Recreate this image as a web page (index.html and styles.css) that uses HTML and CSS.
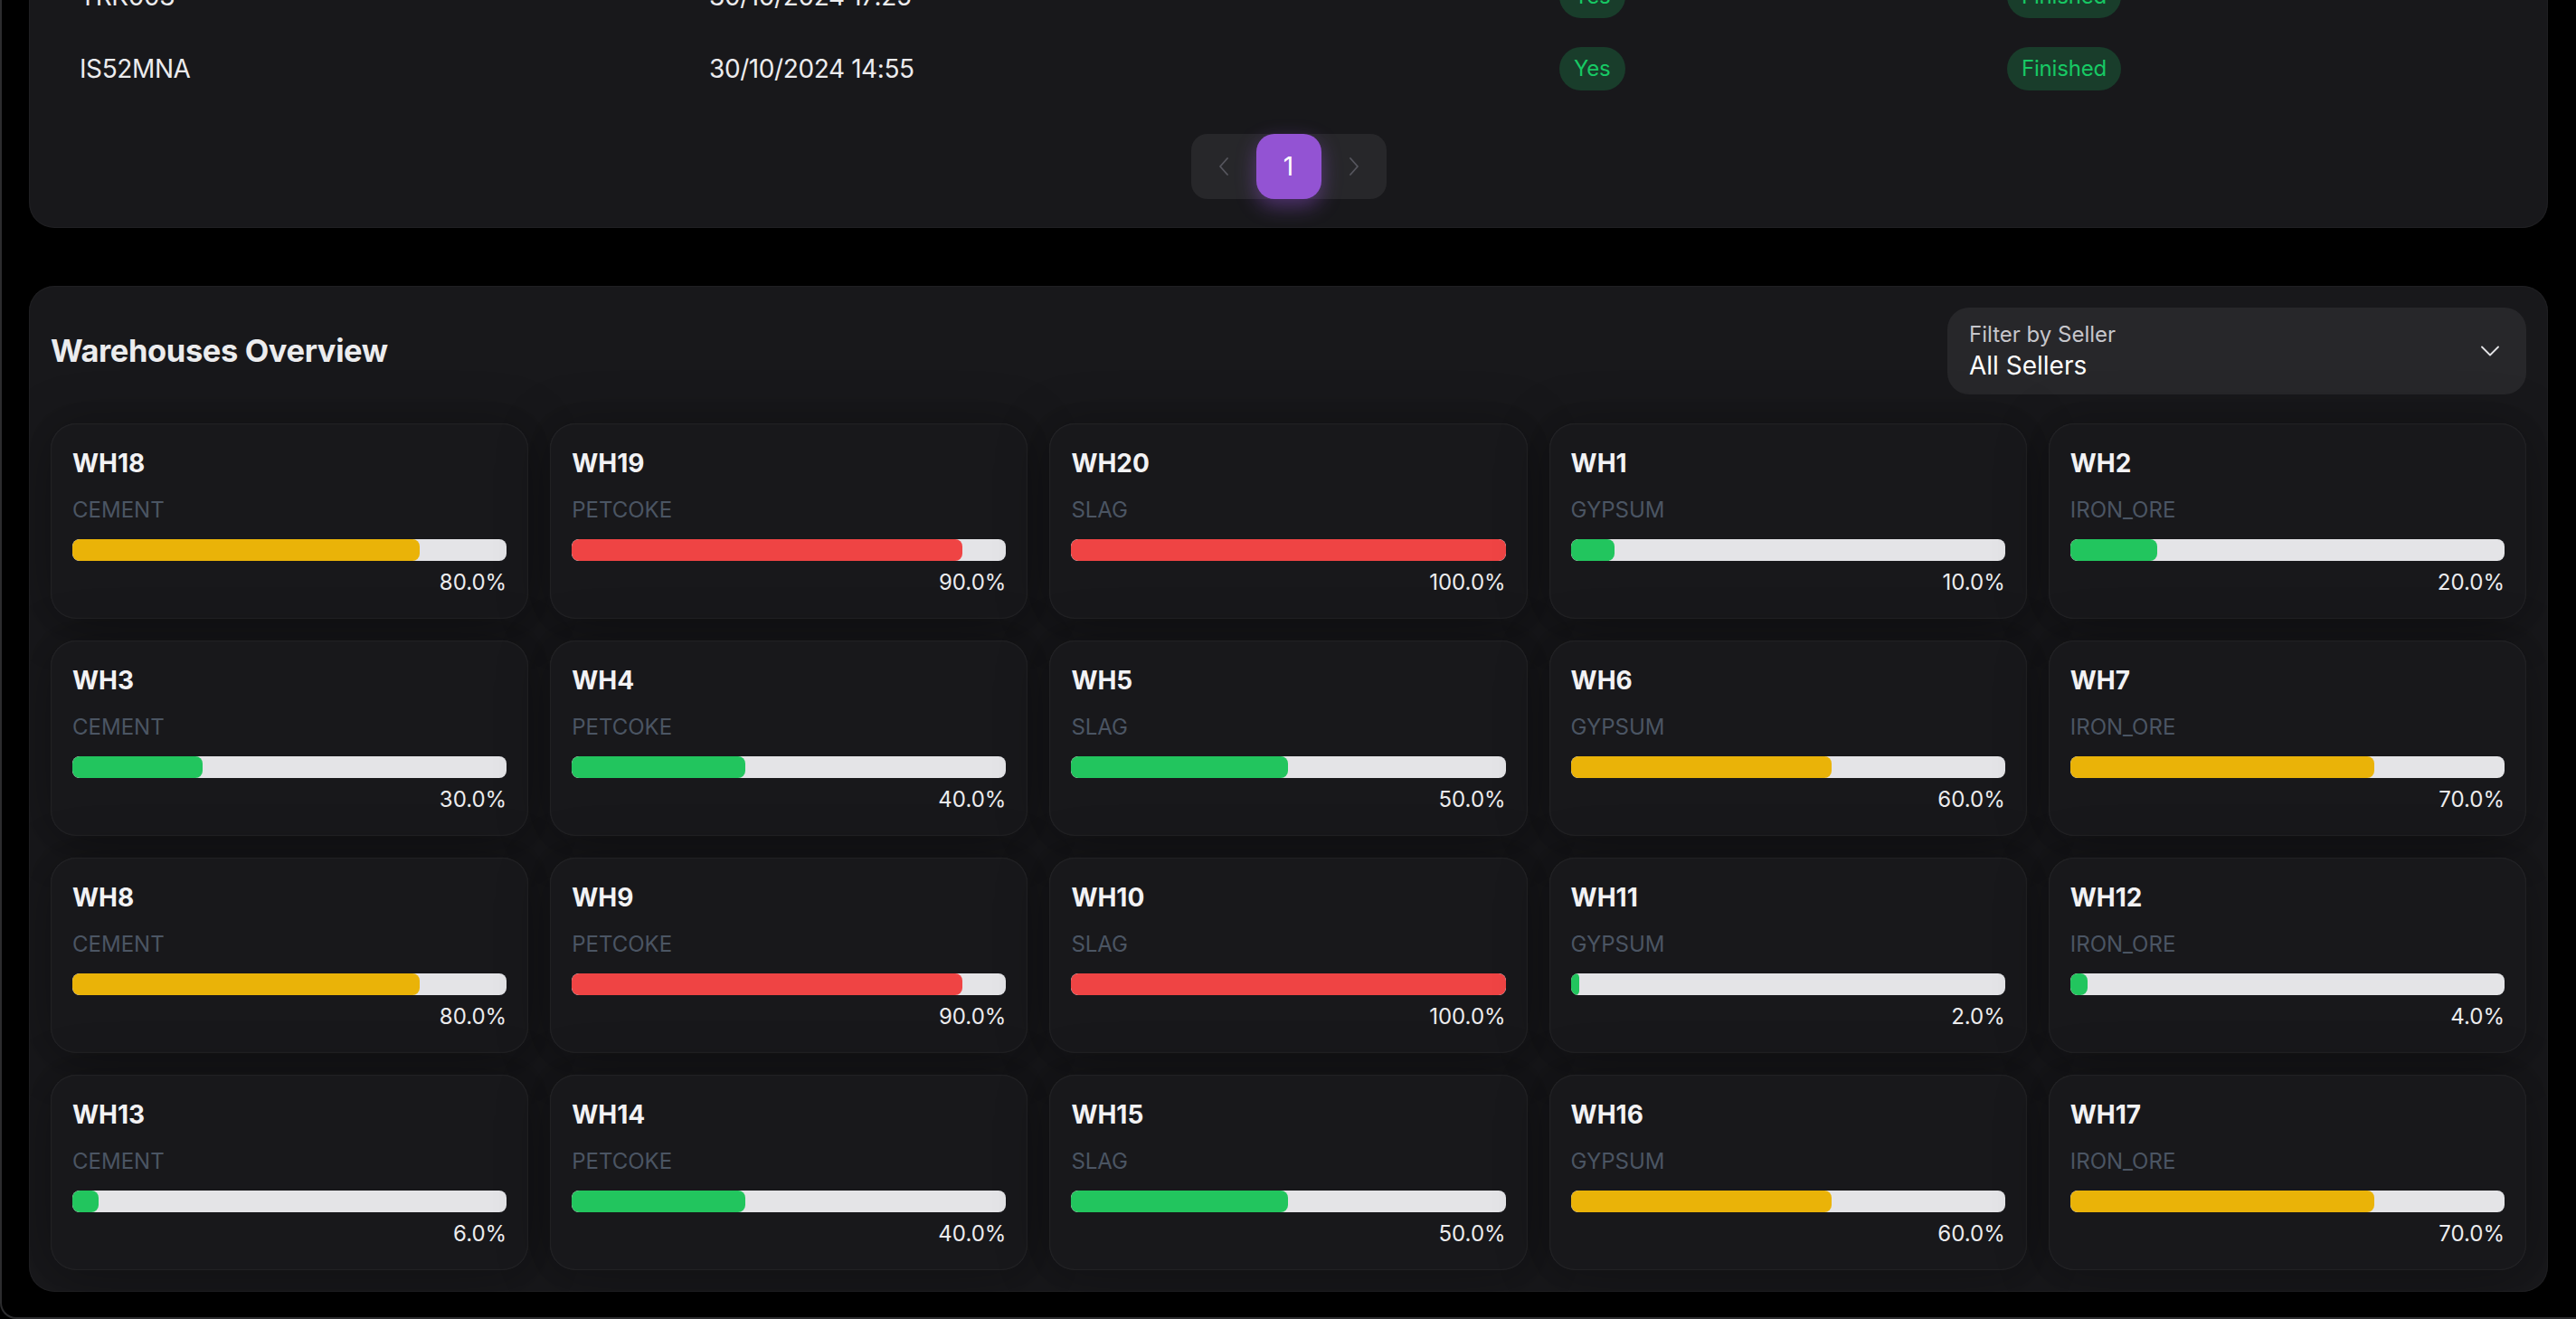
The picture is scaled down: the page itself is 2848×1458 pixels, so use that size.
FILE: index.html
```html
<!DOCTYPE html>
<html lang="en">
<head>
<meta charset="utf-8">
<title>Warehouses Overview</title>
<link rel="stylesheet" href="styles.css">
</head>
<body>
<div class="frame"></div>
<main class="page">
  <section class="card table-card">
    <div class="table">
      <div class="tr">
        <div class="td">TRK003</div>
        <div class="td">30/10/2024 17:25</div>
        <div class="td"><span class="chip">Yes</span></div>
        <div class="td"><span class="chip">Finished</span></div>
      </div>
      <div class="tr">
        <div class="td">IS52MNA</div>
        <div class="td">30/10/2024 14:55</div>
        <div class="td"><span class="chip">Yes</span></div>
        <div class="td"><span class="chip">Finished</span></div>
      </div>
    </div>
    <nav class="pagination">
      <button class="pg-item pg-arrow" aria-label="previous">
        <svg width="12" height="20" viewBox="0 0 12 20"><polyline points="10,1 2,10 10,19" fill="none" stroke="currentColor" stroke-width="1.8" stroke-linecap="round" stroke-linejoin="round"/></svg>
      </button>
      <button class="pg-item pg-active">1</button>
      <button class="pg-item pg-arrow" aria-label="next">
        <svg width="12" height="20" viewBox="0 0 12 20"><polyline points="2,1 10,10 2,19" fill="none" stroke="currentColor" stroke-width="1.8" stroke-linecap="round" stroke-linejoin="round"/></svg>
      </button>
    </nav>
  </section>

  <section class="card wh-section">
    <header class="wh-header">
      <h2 class="wh-title">Warehouses Overview</h2>
      <div class="select">
        <div class="select-text">
          <span class="select-label">Filter by Seller</span>
          <span class="select-value">All Sellers</span>
        </div>
        <svg class="select-chevron" width="20" height="12" viewBox="0 0 20 12"><polyline points="1,1.5 10,10.5 19,1.5" fill="none" stroke="currentColor" stroke-width="1.8" stroke-linecap="round" stroke-linejoin="round"/></svg>
      </div>
    </header>

    <div class="wh-grid">
      <div class="wh-card"><div class="wh-name">WH18</div><div class="wh-type">CEMENT</div><div class="bar"><div class="fill yellow" style="width:80%"></div></div><div class="pct">80.0%</div></div>
      <div class="wh-card"><div class="wh-name">WH19</div><div class="wh-type">PETCOKE</div><div class="bar"><div class="fill red" style="width:90%"></div></div><div class="pct">90.0%</div></div>
      <div class="wh-card"><div class="wh-name">WH20</div><div class="wh-type">SLAG</div><div class="bar"><div class="fill red" style="width:100%"></div></div><div class="pct">100.0%</div></div>
      <div class="wh-card"><div class="wh-name">WH1</div><div class="wh-type">GYPSUM</div><div class="bar"><div class="fill green" style="width:10%"></div></div><div class="pct">10.0%</div></div>
      <div class="wh-card"><div class="wh-name">WH2</div><div class="wh-type">IRON_ORE</div><div class="bar"><div class="fill green" style="width:20%"></div></div><div class="pct">20.0%</div></div>

      <div class="wh-card"><div class="wh-name">WH3</div><div class="wh-type">CEMENT</div><div class="bar"><div class="fill green" style="width:30%"></div></div><div class="pct">30.0%</div></div>
      <div class="wh-card"><div class="wh-name">WH4</div><div class="wh-type">PETCOKE</div><div class="bar"><div class="fill green" style="width:40%"></div></div><div class="pct">40.0%</div></div>
      <div class="wh-card"><div class="wh-name">WH5</div><div class="wh-type">SLAG</div><div class="bar"><div class="fill green" style="width:50%"></div></div><div class="pct">50.0%</div></div>
      <div class="wh-card"><div class="wh-name">WH6</div><div class="wh-type">GYPSUM</div><div class="bar"><div class="fill yellow" style="width:60%"></div></div><div class="pct">60.0%</div></div>
      <div class="wh-card"><div class="wh-name">WH7</div><div class="wh-type">IRON_ORE</div><div class="bar"><div class="fill yellow" style="width:70%"></div></div><div class="pct">70.0%</div></div>

      <div class="wh-card"><div class="wh-name">WH8</div><div class="wh-type">CEMENT</div><div class="bar"><div class="fill yellow" style="width:80%"></div></div><div class="pct">80.0%</div></div>
      <div class="wh-card"><div class="wh-name">WH9</div><div class="wh-type">PETCOKE</div><div class="bar"><div class="fill red" style="width:90%"></div></div><div class="pct">90.0%</div></div>
      <div class="wh-card"><div class="wh-name">WH10</div><div class="wh-type">SLAG</div><div class="bar"><div class="fill red" style="width:100%"></div></div><div class="pct">100.0%</div></div>
      <div class="wh-card"><div class="wh-name">WH11</div><div class="wh-type">GYPSUM</div><div class="bar"><div class="fill green" style="width:2%"></div></div><div class="pct">2.0%</div></div>
      <div class="wh-card"><div class="wh-name">WH12</div><div class="wh-type">IRON_ORE</div><div class="bar"><div class="fill green" style="width:4%"></div></div><div class="pct">4.0%</div></div>

      <div class="wh-card"><div class="wh-name">WH13</div><div class="wh-type">CEMENT</div><div class="bar"><div class="fill green" style="width:6%"></div></div><div class="pct">6.0%</div></div>
      <div class="wh-card"><div class="wh-name">WH14</div><div class="wh-type">PETCOKE</div><div class="bar"><div class="fill green" style="width:40%"></div></div><div class="pct">40.0%</div></div>
      <div class="wh-card"><div class="wh-name">WH15</div><div class="wh-type">SLAG</div><div class="bar"><div class="fill green" style="width:50%"></div></div><div class="pct">50.0%</div></div>
      <div class="wh-card"><div class="wh-name">WH16</div><div class="wh-type">GYPSUM</div><div class="bar"><div class="fill yellow" style="width:60%"></div></div><div class="pct">60.0%</div></div>
      <div class="wh-card"><div class="wh-name">WH17</div><div class="wh-type">IRON_ORE</div><div class="bar"><div class="fill yellow" style="width:70%"></div></div><div class="pct">70.0%</div></div>
    </div>
  </section>
</main>
</body>
</html>
```

FILE: styles.css
```css
* { box-sizing: border-box; }

html, body {
  margin: 0;
  padding: 0;
  background: #000;
  height: 1458px;
  overflow: hidden;
}

body {
  font-family: Inter, "Noto Sans", "Liberation Sans", sans-serif;
  color: #ececee;
  -webkit-font-smoothing: antialiased;
}

.frame {
  position: fixed;
  inset: 0;
  border-left: 2px solid #2c2c2e;
  border-bottom: 2px solid #2c2c2e;
  border-bottom-left-radius: 18px;
  pointer-events: none;
  z-index: 10;
}

.page {
  padding: 0 31px 0 32px;
}

.card {
  background: #18181b;
  border-radius: 28px;
  box-shadow: 0 0 30px rgba(0,0,0,0.06), 0 4px 60px rgba(0,0,0,0.22), inset 0 0 2px rgba(255,255,255,0.12);
}

/* ---------- table card ---------- */
.table-card {
  margin-top: -76px;
  padding: 32px;
  display: flex;
  flex-direction: column;
  gap: 32px;
}

.table {
  display: flex;
  flex-direction: column;
}

.tr {
  display: grid;
  grid-template-columns: 696px 940px 495px 1fr;
  height: 80px;
  align-items: center;
}

.td {
  padding: 0 24px;
  font-size: 28px;
  line-height: 40px;
  letter-spacing: -0.4px;
  color: #ececee;
  white-space: nowrap;
}

.chip {
  display: inline-flex;
  align-items: center;
  height: 48px;
  padding: 0 16px;
  border-radius: 24px;
  background: #193d2b;
  color: #17c964;
  font-size: 24px;
  line-height: 32px;
  letter-spacing: -0.2px;
}

.pagination {
  align-self: center;
  display: flex;
  background: #27272a;
  border-radius: 18px;
}

.pg-item {
  width: 72px;
  height: 72px;
  border: 0;
  padding: 0;
  background: transparent;
  display: flex;
  align-items: center;
  justify-content: center;
  font-family: inherit;
  font-size: 28px;
  color: #fff;
}

.pg-arrow { color: #56565e; }

.pg-active {
  background: #9353d3;
  border-radius: 20px;
  box-shadow: 0 8px 22px rgba(147, 83, 211, 0.45);
}

/* ---------- warehouses ---------- */
.wh-section {
  margin-top: 64px;
  padding: 24px;
}

.wh-header {
  display: flex;
  align-items: center;
  justify-content: space-between;
  height: 96px;
  margin-bottom: 32px;
}

.wh-title {
  margin: 0;
  font-size: 34.5px;
  line-height: 48px;
  font-weight: 700;
  color: #ececee;
  letter-spacing: -0.4px;
}

.select {
  width: 640px;
  height: 96px;
  background: #27272a;
  border-radius: 24px;
  display: flex;
  align-items: center;
  justify-content: space-between;
  padding: 0 30px 0 24px;
}

.select-text {
  display: flex;
  flex-direction: column;
}

.select-label {
  font-size: 24px;
  line-height: 32px;
  color: #c6c6cb;
}

.select-value {
  font-size: 28px;
  line-height: 36px;
  color: #fff;
}

.select-chevron {
  color: #e4e4e7;
  margin-top: 0;
}

.wh-grid {
  display: grid;
  grid-template-columns: repeat(5, 1fr);
  gap: 24px;
}

.wh-card {
  background: #18181b;
  border-radius: 28px;
  padding: 24px;
  box-shadow: 0 0 30px rgba(0,0,0,0.08), 0 4px 60px rgba(0,0,0,0.3), inset 0 0 2px rgba(255,255,255,0.16);
}

.wh-name {
  font-size: 28px;
  line-height: 40px;
  font-weight: 700;
  color: #f2f2f4;
}

.wh-type {
  margin-top: 16px;
  font-size: 24px;
  line-height: 32px;
  color: #4b5563;
}

.bar {
  margin-top: 16px;
  height: 24px;
  background: #e4e4e7;
  border-radius: 8px;
  overflow: hidden;
}

.fill {
  height: 100%;
  border-radius: 8px;
}

.fill.yellow { background: #eab308; }
.fill.red { background: #ef4444; }
.fill.green { background: #22c55e; }

.pct {
  margin-top: 8px;
  font-size: 24px;
  line-height: 32px;
  text-align: right;
  color: #ececee;
}
```
